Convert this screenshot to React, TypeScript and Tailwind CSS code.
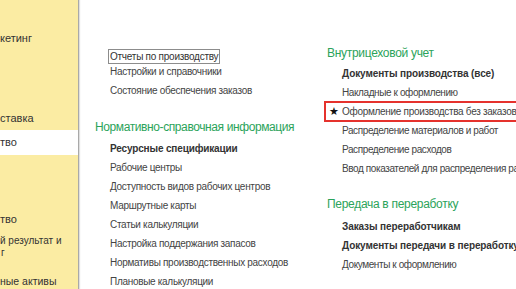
import React from "react";

const sidebar = [
  { label: "кетинг", top: "mt-[31px]" },
  { label: "ставка", top: "mt-[66px]" },
];

function Item({ text, bold, right }: { text: string; bold?: boolean; right?: boolean }) {
  const spacing = right
    ? bold
      ? "tracking-[-0.1px]"
      : "tracking-[-0.4px]"
    : bold
      ? "tracking-[-0.15px]"
      : "tracking-[-0.3px]";
  return (
    <div
      className={`h-[19px] pl-[15px] leading-[19px] whitespace-nowrap text-[10px] ${spacing} ${
        bold ? "font-bold text-[#333]" : "text-[#444]"
      }`}
    >
      {text}
    </div>
  );
}

function Heading({ text, className }: { text: string; className?: string }) {
  return (
    <div className={`h-[22px] leading-[22px] whitespace-nowrap text-[12px] text-[#2ba35a] ${className ?? ""}`}>
      {text}
    </div>
  );
}

export default function App() {
  return (
    <div
      className="flex h-[289px] w-[516px] overflow-hidden bg-white"
      style={{ fontFamily: '"Liberation Sans", Arial, sans-serif' }}
    >
      <aside className="flex w-[79px] shrink-0 flex-col border-r border-[#a9a9a9] bg-[#fbeca3] text-[11px] text-[#333] shadow-[1px_0_1px_rgba(0,0,0,0.12)]">
        {sidebar.map((s) => (
          <div key={s.label} className={`${s.top} h-[14px] leading-[14px] whitespace-nowrap`}>
            {s.label}
          </div>
        ))}
        <div className="mt-[5px] h-[25px] bg-white leading-[25px]">тво</div>
        <div className="mt-[57px] h-[14px] leading-[14px]">тво</div>
        <div className="mt-[9px] text-[10px] leading-[12px] whitespace-nowrap">
          <div>й результат и</div>
          <div className="pl-[1px]">г</div>
        </div>
        <div className="mt-[15px] h-[14px] text-[10.5px] leading-[14px] whitespace-nowrap">ные активы</div>
      </aside>

      <main className="flex min-w-0 flex-1 pl-[16px]">
        <section className="w-[232px] shrink-0 pt-[43px]">
          <div className="h-[19px] pl-[13px]">
            <span className="inline-block h-[15px] border border-[#8c8c8c] px-[1px] leading-[13px] whitespace-nowrap text-[10px] tracking-[-0.25px] text-[#333]">
              Отчеты по производству
            </span>
          </div>
          <Item text="Настройки и справочники" />
          <Item text="Состояние обеспечения заказов" />
          <Heading text="Нормативно-справочная информация" className="mt-[16px] mb-[1px] tracking-[-0.4px]" />
          <Item text="Ресурсные спецификации" bold />
          <Item text="Рабочие центры" />
          <Item text="Доступность видов рабочих центров" />
          <Item text="Маршрутные карты" />
          <Item text="Статьи калькуляции" />
          <Item text="Настройка поддержания запасов" />
          <Item text="Нормативы производственных расходов" />
          <Item text="Плановые калькуляции" />
        </section>

        <section className="min-w-0 flex-1 pt-[42px]">
          <Heading text="Внутрицеховой учет" className="tracking-[-0.3px]" />
          <Item text="Документы производства (все)" bold right />
          <Item text="Накладные к оформлению" right />
          <div className="-ml-[3px] -mr-[20px] -my-[1px] flex h-[21px] items-center border-2 border-[#e5322d] whitespace-nowrap text-[10px] tracking-[-0.3px] text-[#444]">
            <span className="w-[16px] pl-[3px] text-[10.5px] leading-none text-[#111]">★</span>
            <span>Оформление производства без заказов</span>
          </div>
          <Item text="Распределение материалов и работ" right />
          <Item text="Распределение расходов" right />
          <Item text="Ввод показателей для распределения расходов" right />
          <Heading text="Передача в переработку" className="mt-[15px] mb-[2px] tracking-[-0.3px]" />
          <Item text="Заказы переработчикам" bold right />
          <Item text="Документы передачи в переработку" bold right />
          <Item text="Документы к оформлению" right />
        </section>
      </main>
    </div>
  );
}
